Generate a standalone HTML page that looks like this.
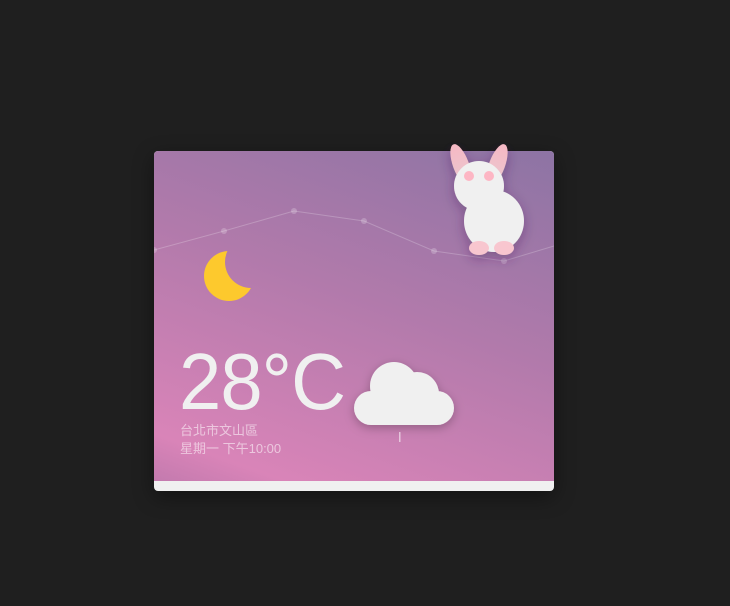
<!DOCTYPE html>
<html><head><meta charset="utf-8"><style>
html,body{margin:0;padding:0;background:#1f1f1f;width:730px;height:606px;overflow:hidden;font-family:"Liberation Sans","Noto Sans CJK TC",sans-serif}
.card{position:absolute;left:154px;top:151px;width:400px;height:340px;border-radius:4px;overflow:hidden;background:#f0f0f0;box-shadow:0 6px 20px rgba(0,0,0,.4)}
.bg{position:absolute;left:0;top:0;width:400px;height:330px;background:linear-gradient(200deg,#8d74a4 0%,#b17aab 45%,#d984b8 90%,#c37aae 100%)}
.temp{position:absolute;left:25px;top:191px;font-size:80px;color:#f0f0f0;letter-spacing:-1px;line-height:1;transform:scaleX(0.95);transform-origin:left top}
.t{position:absolute;left:26px;font-size:13px;color:rgba(255,255,255,.55)}
</style></head><body>
<div class="card"><div class="bg"></div>
<svg width="400" height="340" style="position:absolute;left:0;top:0">
<polyline points="0,99 70,80 140,60 210,70 280,100 350,110 400,95" fill="none" stroke="rgba(255,255,255,.22)" stroke-width="1"/>
<g fill="rgba(255,255,255,.22)"><circle cx="0" cy="99" r="3"/><circle cx="70" cy="80" r="3"/><circle cx="140" cy="60" r="3"/><circle cx="210" cy="70" r="3"/><circle cx="280" cy="100" r="3"/><circle cx="350" cy="110" r="3"/></g>
<defs><mask id="m"><rect width="400" height="340" fill="#fff"/><circle cx="97" cy="111" r="26" fill="#000"/></mask>
<filter id="sh" x="-50%" y="-50%" width="200%" height="200%"><feDropShadow dx="0" dy="3" stdDeviation="5" flood-color="#000" flood-opacity=".25"/></filter></defs>
<circle cx="75" cy="125" r="25" fill="#fdc92d" mask="url(#m)"/>
<g filter="url(#sh)" fill="#f0f0f0">
<circle cx="217" cy="257" r="17"/>
<circle cx="283" cy="257" r="17"/>
<circle cx="240" cy="235" r="24"/>
<circle cx="263" cy="243" r="22"/>
<rect x="217" y="240" width="66" height="34"/>
</g>
<rect x="245" y="281" width="1.5" height="10" fill="rgba(255,255,255,.55)"/>
</svg>
<div class="temp">28°C</div>
<div class="t" style="top:269px">台北市文山區</div>
<div class="t" style="top:287px">星期一 下午10:00</div>
</div>
<svg width="730" height="606" style="position:absolute;left:0;top:0">
<defs><linearGradient id="ear" x1="0" y1="0" x2="0" y2="1"><stop offset="0" stop-color="#f6b8c4"/><stop offset="1" stop-color="#e9c9d0"/></linearGradient>
<filter id="s2" x="-50%" y="-50%" width="200%" height="200%"><feDropShadow dx="0" dy="4" stdDeviation="6" flood-color="#3a2050" flood-opacity=".35"/></filter></defs>
<g filter="url(#s2)">
<ellipse cx="461" cy="165" rx="8" ry="22" transform="rotate(-20 461 165)" fill="url(#ear)"/>
<ellipse cx="497" cy="165" rx="8" ry="22" transform="rotate(20 497 165)" fill="url(#ear)"/>
<ellipse cx="494" cy="221" rx="30" ry="31" fill="#f0f0f0"/>
<circle cx="479" cy="186" r="25" fill="#f0f0f0"/>
<ellipse cx="479" cy="248" rx="10" ry="7" fill="#f8c6cf"/>
<ellipse cx="504" cy="248" rx="10" ry="7" fill="#f8c6cf"/>
</g>
<circle cx="469" cy="176" r="5" fill="#fdb6c4"/><circle cx="489" cy="176" r="5" fill="#fdb6c4"/>
</svg>
</body></html>
